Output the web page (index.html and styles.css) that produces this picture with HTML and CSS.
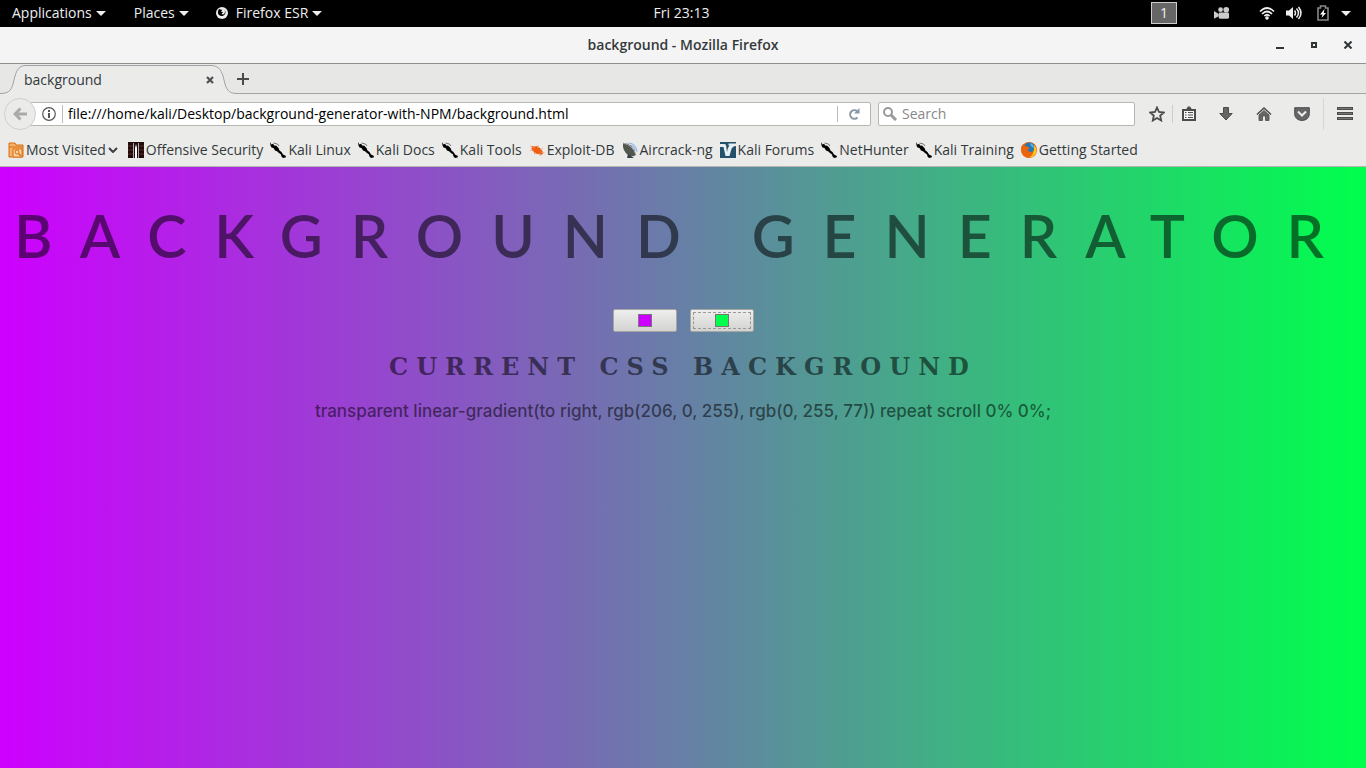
FILE: index.html
```html
<!DOCTYPE html>
<html lang="en">
<head>
<meta charset="utf-8">
<title>background - Mozilla Firefox</title>
<link rel="stylesheet" href="styles.css">
</head>
<body>
<svg class="defs" aria-hidden="true">
  <symbol id="kali" viewBox="0 0 16 16"><path d="M0 0l1.500 2.500L3 1.800 4.500 3.800 6 3.500l2.500 2.500 1 2.500 2 1.500 1.500 2.500L16 14l-.5 1.500-2.500.5-1.500-1.500-.5-2L9 11 7 9.300 5 8.500 3.500 6 1.500 5.500.5 3.500z" fill="#000"/><path d="M3.500 1l4 1L9 4" fill="none" stroke="#444" stroke-width=".7"/></symbol>
  <symbol id="caret" viewBox="0 0 10 5"><path d="M0 0h10L5 5z" fill="currentColor"/></symbol>
</svg>
<header class="panel">
  <nav class="panel-menus">
    <button class="panel-button">Applications <svg class="caret"><use href="#caret"/></svg></button>
    <button class="panel-button">Places <svg class="caret"><use href="#caret"/></svg></button>
    <button class="panel-button"><svg class="app-icon" viewBox="0 0 12 12"><circle cx="6" cy="6" r="6" fill="#eee"/><path d="M3 2c1.500.2 2 1 3.500.7L5 4.500l2 .8L5.500 7C7 8 9 7 9 4.500 9 3 8 2 7 1.500c2 1 3 3 2.300 5C8.500 9 5 10 3 8 1.500 6.500 1.600 4 3 2z" fill="#000"/></svg>Firefox ESR <svg class="caret"><use href="#caret"/></svg></button>
  </nav>
  <time class="clock">Fri 23:13</time>
  <div class="tray">
    <button class="workspace">1</button>
    <svg class="tray-camera" viewBox="0 0 17 14" fill="#ccc"><circle cx="7" cy="3.500" r="2.500"/><circle cx="13" cy="3.500" r="3"/><rect x="5" y="6.500" width="11" height="6.500" rx="1.500"/><path d="M0 5l5 3v2.500L0 13z"/></svg>
    <svg class="tray-wifi" viewBox="0 0 16 14" fill="none" stroke="#eee" stroke-width="1.700"><path d="M1 5.500Q8-1.500 15 5.500M3 8Q8 3 13 8M5.300 10Q8 7.500 10.700 10"/><circle cx="8" cy="12" r="1.800" fill="#eee" stroke="none"/></svg>
    <svg class="tray-sound" viewBox="0 0 16 14" fill="none" stroke="#eee" stroke-width="1.500"><path d="M0 4.500h3L7 1v12L3 9.500H0z" fill="#eee" stroke="none"/><path d="M8.500 4.500q2 2.500 0 5M10.500 2.500q4 4.500 0 9M12.500 1q5 6 0 12"/></svg>
    <svg class="tray-battery" viewBox="0 0 12 16"><path d="M1 3h2.500V1h5v2H11v12H1z" fill="none" stroke="#888" stroke-width="1.600"/><path d="M7.500 4L3 9.500h2.500L4.500 13 9 8H6.800z" fill="#fff"/></svg>
    <svg class="caret"><use href="#caret"/></svg>
  </div>
</header>

<div class="titlebar">
  <span class="window-title">background - Mozilla Firefox</span>
  <div class="window-controls">
    <button class="window-button" aria-label="Minimize"><svg viewBox="0 0 8 8"><path d="M0 6h8v2H0z"/></svg></button>
    <button class="window-button" aria-label="Maximize"><svg viewBox="0 0 8 8"><path d="M2 2h4v4H2z" fill="none" stroke="#2e3436" stroke-width="2"/></svg></button>
    <button class="window-button" aria-label="Close"><svg viewBox="0 0 8 8"><path d="M.5.500l7 7m0-7l-7 7" stroke="#2e3436" stroke-width="2"/></svg></button>
  </div>
</div>

<div class="tabs">
  <div class="tab">
    <svg class="tab-shape" viewBox="0 0 237 30"><path d="M0 30V29.500C8 29.500 11 27 13 20l2-8C17 5 20 1.500 26 1.500H211C217 1.500 221 5 223 12l2 8c2 7 5 9.500 12 9.500v.5z" fill="#ebebea"/><path d="M0 29.500C8 29.500 11 27 13 20l2-8C17 5 20 1.500 26 1.500H211C217 1.500 221 5 223 12l2 8c2 7 5 9.500 12 9.500" fill="none" stroke="#a0a4a8"/></svg>
    <div class="tab-content">
      <span class="tab-label">background</span>
      <button class="tab-close" aria-label="Close tab"><svg viewBox="0 0 8 8"><path d="M1 1l6 6m0-6L1 7" stroke="#4d5254" stroke-width="2.200"/></svg></button>
    </div>
  </div>
  <button class="new-tab" aria-label="New tab"><svg viewBox="0 0 12 12"><path d="M6 0v12M0 6h12" stroke="#4c4c4c" stroke-width="2"/></svg></button>
</div>

<div class="toolbar">
  <button class="back" aria-label="Back"><svg viewBox="0 0 14 14"><path d="M7.500 1.500L2 7l5.500 5.500M2.500 7H14" fill="none" stroke="#aaa" stroke-width="3"/></svg></button>
  <div class="address">
    <svg class="info" viewBox="0 0 14 14"><circle cx="7" cy="7" r="6.300" fill="none" stroke="#555" stroke-width="1.200"/><path d="M6 3h2v2H6zM6 6h2v5H6z" fill="#555"/></svg>
    <input class="url" aria-label="Address" value="file:///home/kali/Desktop/background-generator-with-NPM/background.html">
    <button class="reload" aria-label="Reload"><svg viewBox="0 0 12 12"><path d="M9.500 9.500A4.300 4.300 0 1 1 9 3" fill="none" stroke="#8797a5" stroke-width="2"/><path d="M11.500 0v5.500H6z" fill="#8797a5"/></svg></button>
  </div>
  <div class="search">
    <svg class="search-icon" viewBox="0 0 14 14"><circle cx="5" cy="5" r="4" fill="none" stroke="#999" stroke-width="2"/><path d="M8 8l5 5" stroke="#999" stroke-width="3"/></svg>
    <input class="search-input" aria-label="Search" placeholder="Search">
  </div>
  <div class="tools">
    <button class="tool tool-star" aria-label="Bookmark this page"><svg viewBox="0 0 16 16"><path d="M8 1.500l2 4.500 4.800.5-3.600 3.200 1 4.800L8 12l-4.200 2.500 1-4.800L1.200 6.500 6 6z" fill="none" stroke="#4c4c4c" stroke-width="1.800"/></svg></button>
    <button class="tool tool-list" aria-label="Show bookmarks"><svg viewBox="0 0 16 16"><path d="M2 4h12v10H2z" fill="#f4f4f4" stroke="#4c4c4c" stroke-width="2"/><path d="M5 3.500l2-3h2l2 3zM4 6h1.500v1H4zm3 0h5v1H7zM4 8.500h1.500v1H4zm3 0h5v1H7zM4 11h1.500v1H4zm3 0h5v1H7z" fill="#4c4c4c"/></svg></button>
    <button class="tool" aria-label="Downloads"><svg viewBox="0 0 16 16"><path d="M5.500 1.500h5v6h3.700L8 14 1.800 7.500h3.700z" fill="#666" stroke="#4c4c4c"/></svg></button>
    <button class="tool" aria-label="Home"><svg viewBox="0 0 16 16"><path d="M1 8.500L8 2l7 6.500" fill="none" stroke="#4c4c4c" stroke-width="1.600"/><path d="M3 9l5-4.500L13 9v5.500H9.500V10h-3v4.500H3z" fill="#666" stroke="#4c4c4c" stroke-width=".8"/></svg></button>
    <button class="tool" aria-label="Pocket"><svg viewBox="0 0 16 16"><path d="M.7 1.700h14.600v6c0 9-14.600 9-14.600 0z" fill="#666" stroke="#4c4c4c"/><path d="M4 5.500l4 4 4-4" fill="none" stroke="#eee" stroke-width="2"/></svg></button>
    <button class="tool tool-menu" aria-label="Menu"><svg viewBox="0 0 16 16"><path d="M0 2.500h16M0 7.500h16M0 12.500h16" stroke="#4c4c4c" stroke-width="3"/><path d="M1 2.500h14M1 7.500h14M1 12.500h14" stroke="#777"/></svg></button>
  </div>
</div>

<nav class="bookmarks">
  <a class="bookmark" href="#"><svg viewBox="0 0 16 16"><path d="M1 1h6l1 2h7v12H1z" fill="#f6b26b" stroke="#d96c0e"/><path d="M1 5h14" stroke="#d96c0e"/><path d="M5 7h9v8H5z" fill="#fbd5a5" stroke="#d96c0e"/><circle cx="9" cy="10" r="2" fill="none" stroke="#d96c0e"/><path d="M10.500 11.500L13 14" stroke="#d96c0e" stroke-width="1.500"/></svg>Most Visited<svg class="chevron" viewBox="0 0 10 6"><path d="M1 1l4 4 4-4" fill="none" stroke="#3c4042" stroke-width="2"/></svg></a>
  <a class="bookmark" href="#"><svg viewBox="0 0 16 16"><path d="M0 0h16v16H0z" fill="#210c0c"/><path d="M0 4h5M0 8h5M0 12h5M11 4h5M11 8h5M11 12h5" stroke="#5c2828"/><path d="M5 1h1v15H5zM10 1h1v15h-1z" fill="#aaa"/><path d="M7 6l1-4 1 4v10H7z" fill="#fff"/></svg>Offensive Security</a>
  <a class="bookmark" href="#"><svg><use href="#kali"/></svg>Kali Linux</a>
  <a class="bookmark" href="#"><svg><use href="#kali"/></svg>Kali Docs</a>
  <a class="bookmark" href="#"><svg><use href="#kali"/></svg>Kali Tools</a>
  <a class="bookmark" href="#"><svg viewBox="0 0 16 16"><path d="M3 4l3 .5L7.500 4 11 6l2.500 3 .5 3-2 .8-3-.8-3-.5L4 9 2.500 7z" fill="#ee5d12"/><path d="M1 8l4 1M5 12l2-2M9 3v3M12 14l-2-3M14 6l-3 2M15.500 11l-4-1M1 4l5 2" stroke="#f39a6b" stroke-width=".8"/></svg>Exploit-DB</a>
  <a class="bookmark" href="#"><svg viewBox="0 0 16 16"><path d="M6 1q8 0 9 9M8 3q5 1 5 6" fill="none" stroke="#9bb7e5" stroke-width="1.200"/><path d="M1 1q10 0 13 12-3 2-7 1Q0 9 1 1z" fill="#50574f"/><path d="M1 1q10 2 13 12" fill="none" stroke="#aaa"/><path d="M6 12l6 4H5z" fill="#384048"/></svg>Aircrack-ng</a>
  <a class="bookmark" href="#"><svg viewBox="0 0 16 16"><path d="M0 0h16v16H0z" fill="#23506a"/><path d="M0 2h4.500q1.500 0 1.700 2L7 10q1-6 3-6.500H8.500V1.500H16V4q-4 0-5 4.500L9.500 14H5.500L3.500 5H0z" fill="#e8edf0"/></svg>Kali Forums</a>
  <a class="bookmark" href="#"><svg><use href="#kali"/></svg>NetHunter</a>
  <a class="bookmark" href="#"><svg><use href="#kali"/></svg>Kali Training</a>
  <a class="bookmark" href="#"><svg viewBox="0 0 16 16"><circle cx="8" cy="8" r="8" fill="#e8640c"/><circle cx="8.500" cy="6" r="5.500" fill="#2479b7"/><path d="M9 1q4 1 4 5l-3-2z" fill="#57b4e4"/><path d="M1 3q1 1 3 .5L7 5l2 1-2.500 2q2 3 5 1.500 2.500-2 2-5 3 5 0 8.500-5 4.500-10.500 1Q-1.500 9 1 3z" fill="#e9650f"/><path d="M13 3q4.500 5 1 9.500-2 3-6 3.300 6-3.800 5-12.800z" fill="#fdc821"/></svg>Getting Started</a>
</nav>

<main class="page">
  <h1 class="heading">Background Generator</h1>
  <form class="swatches">
    <button type="button" class="swatch" aria-label="First color"><span class="chip chip-violet"></span></button>
    <button type="button" class="swatch swatch-focus" aria-label="Second color"><span class="chip chip-green"></span></button>
  </form>
  <h2 class="subheading">Current CSS Background</h2>
  <h3 class="value">transparent linear-gradient(to right, rgb(206, 0, 255), rgb(0, 255, 77)) repeat scroll 0% 0%;</h3>
</main>
</body>
</html>
```
FILE: styles.css
```css
* { box-sizing: border-box; }
body {
  margin: 0;
  min-height: 100vh;
  display: flex;
  flex-direction: column;
  font: 14px/20px "Open Sans", "Noto Sans", sans-serif;
  color: #33393b;
  background: #ebebea;
}
button {
  font: inherit;
  color: inherit;
  border: 0;
  padding: 0;
  background: none;
  display: flex;
  align-items: center;
  justify-content: center;
}
input { font: inherit; border: 0; padding: 0; background: none; min-width: 0; outline: 0; }
svg { display: block; flex: none; }
.defs { width: 0; height: 0; position: absolute; }

.panel {
  display: grid;
  grid-template-columns: 1fr auto 1fr;
  align-items: center;
  height: 27px;
  padding: 0 15px 1px 12px;
  background: #000;
  color: #eee;
}
.panel-menus { display: flex; gap: 28px; }
.panel-button { gap: 4px; }
.panel-button:last-child { margin-left: -1px; }
.caret { width: 10px; height: 5px; }
.app-icon { width: 12px; height: 12px; margin-right: 4px; }
.tray { display: flex; align-items: center; justify-content: flex-end; }
.workspace { width: 26px; height: 22px; background: #666; border: 1px solid #ccc; margin-right: 37px; }
.tray-camera { width: 16px; height: 14px; margin-right: 29px; }
.tray-wifi { width: 16px; height: 14px; margin-right: 11px; }
.tray-sound { width: 16px; height: 14px; margin-right: 15px; }
.tray-battery { width: 12px; height: 16px; margin-right: 12px; }

.titlebar {
  display: grid;
  grid-template-columns: 1fr auto 1fr;
  align-items: center;
  height: 37px;
  padding: 0 14px;
  background: #f4f4f4;
  border-bottom: 1px solid #91918c;
}
.window-title { grid-column: 2; font-weight: 600; }
.window-controls { display: flex; gap: 26px; justify-content: flex-end; }
.window-button svg { width: 8px; height: 8px; fill: #2e3436; }

.tabs {
  display: flex;
  align-items: center;
  height: 30px;
  background: linear-gradient(#e7e7e5 29px, #a3a39f 29px);
}
.tab { display: grid; width: 237px; height: 30px; }
.tab > * { grid-area: 1 / 1; }
.tab-shape { width: 237px; height: 30px; }
.tab-content { display: flex; align-items: center; justify-content: space-between; padding: 2px 23px 0 24px; }
.tab-close svg { width: 8px; height: 8px; }
.new-tab svg { width: 12px; height: 12px; }

.toolbar { display: flex; align-items: center; height: 40px; padding-left: 4px; }
.back {
  width: 32px;
  height: 32px;
  border: 1px solid #cfcfcd;
  border-radius: 50%;
  background: #ebebea;
  z-index: 1;
}
.back svg { width: 14px; height: 14px; }
.address, .search {
  display: flex;
  align-items: center;
  height: 24px;
  background: #fff;
  border: 1px solid #b6b6b3;
  border-radius: 2px;
}
.address { flex: 1; margin-left: -6px; padding-left: 11px; }
.info { width: 14px; height: 14px; margin-right: 6px; }
.url { flex: 1; height: 18px; padding-left: 5px; border-left: 1px solid #bbb; color: #000; }
.reload { width: 33px; height: 16px; border-left: 1px solid #bbb; }
.reload svg { width: 12px; height: 12px; }
.search { width: 257px; margin-left: 7px; padding-left: 4px; gap: 5px; }
.search-icon { width: 14px; height: 14px; }
.search-input { flex: 1; }
.search-input::placeholder { color: #888; opacity: 1; }
.tools { display: flex; align-items: center; margin-left: 7px; }
.tool { width: 38px; height: 32px; }
.tool svg { width: 16px; height: 16px; }
.tool-star { width: 30px; }
.tool-list { width: 35px; }
.tool-list::before { content: ""; width: 1px; height: 18px; margin-right: 8px; background: #ccc; }
.tool-list svg { margin-right: 10px; }
.tool-menu { width: 43px; margin-left: 2px; border-left: 1px solid #d6d6d4; }

.bookmarks { display: flex; align-items: center; gap: 7px; height: 33px; padding: 0 8px; border-bottom: 1px solid #b5b5b1; white-space: nowrap; }
.bookmark { display: flex; align-items: center; gap: 2px; color: inherit; text-decoration: none; }
.bookmark svg { width: 16px; height: 16px; }
.bookmark .chevron { width: 10px; height: 6px; margin-right: 3px; }

.page {
  flex: 1;
  padding-top: 29px;
  text-align: center;
  color: rgba(0, 0, 0, .54);
  background: linear-gradient(to right, rgb(206, 0, 255), rgb(0, 255, 77));
}
.heading {
  margin: 0;
  font: 600 59px/80px Lato, sans-serif;
  letter-spacing: 28px;
  text-transform: uppercase;
  white-space: nowrap;
}
.swatches { display: flex; justify-content: center; gap: 13px; margin-top: 33px; }
.swatch {
  width: 64px;
  height: 23px;
  border: 1px solid #a5a5a1;
  border-radius: 2px;
  background: linear-gradient(#eee, #d3d3d1);
}
.swatch-focus { outline: 1px dashed #999; outline-offset: -4px; }
.chip { width: 14px; height: 13px; border: 1px solid #777; }
.chip-violet { background: #ce00ff; }
.chip-green { background: #00ff4d; }
.subheading {
  margin: 20px 0 0;
  font: bold 24px/30px "DejaVu Serif", serif;
  letter-spacing: 8px;
  text-transform: uppercase;
}
.value { margin: 19px 0 0; font: 500 17px/20px Inter, sans-serif; }
```
